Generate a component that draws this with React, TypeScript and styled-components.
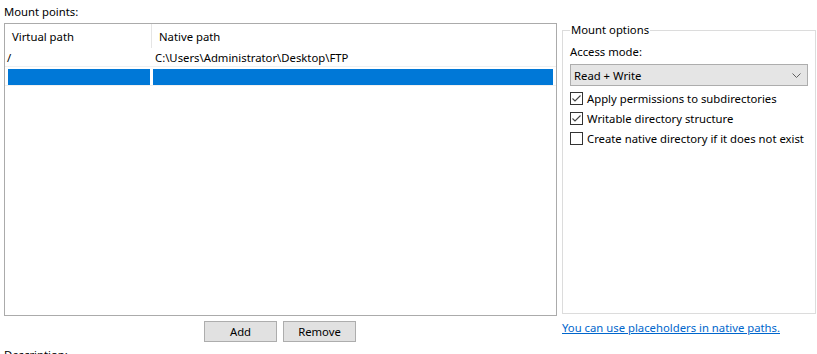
import styled, { createGlobalStyle } from 'styled-components'

/**
 * Style
 */
const GlobalStyle = createGlobalStyle`
  html, body {
    margin: 0;
    padding: 0;
    background: #fff;
  }

  body {
    font-family: "Noto Sans", "Liberation Sans", sans-serif;
    font-size: 11.3px;
    color: #000;
    overflow: hidden;
  }
`

const Page = styled.div`
  width: 817px;
  height: 354px;
  box-sizing: border-box;
  padding: 4px 2px 0 4px;
  overflow: hidden;
`

const Label = styled.div`
  line-height: 16px;
  height: 16px;
  white-space: nowrap;
`

const MainGrid = styled.div`
  display: grid;
  grid-template-columns: 553px 254px;
  column-gap: 5px;
  margin-top: 3px;
`

const LeftColumn = styled.div`
  display: flex;
  flex-direction: column;
`

const ListBox = styled.div`
  height: 293px;
  box-sizing: border-box;
  border: 1px solid #ababab;
  background: #fff;
  display: flex;
  flex-direction: column;
`

const ListRow = styled.div<{ $height: number; $line?: boolean }>`
  display: grid;
  grid-template-columns: 147px 1fr;
  height: ${p => p.$height}px;
  box-sizing: border-box;
  border-bottom: ${p => (p.$line ? '1px solid #f0f0f0' : 'none')};
`

const HeaderCell = styled.div<{ $sep?: boolean }>`
  display: flex;
  align-items: center;
  padding-left: 7px;
  border-right: ${p => (p.$sep ? '1px solid #e5e5e5' : 'none')};
  margin-right: ${p => (p.$sep ? '0' : '2px')};
  white-space: nowrap;
`

const Cell = styled.div<{ $pad: number }>`
  display: flex;
  align-items: center;
  padding-left: ${p => p.$pad}px;
  white-space: nowrap;
`

const SelectedCell = styled.div<{ $left: number; $right: number }>`
  margin: 2px ${p => p.$right}px 0 ${p => p.$left}px;
  background: #0078d7;
`

const ButtonRow = styled.div`
  display: flex;
  justify-content: center;
  gap: 6px;
  margin-top: 5px;
  padding-right: 1px;
`

const Button = styled.button`
  width: 73px;
  height: 21px;
  box-sizing: border-box;
  border: 1px solid #adadad;
  background: #e1e1e1;
  font-family: inherit;
  font-size: 11.3px;
  color: #000;
  padding: 0;
  line-height: 18px;
`

const RightColumn = styled.div`
  display: flex;
  flex-direction: column;
`

const GroupBox = styled.fieldset`
  height: 291px;
  box-sizing: border-box;
  margin: 0;
  padding: 0 7px;
  border: 1px solid #dcdcdc;
  min-width: 0;

  legend {
    padding: 0 1px;
    line-height: 14px;
    margin-left: 0;
  }
`

const FieldLabel = styled.div`
  line-height: 16px;
  margin-top: 7px;
`

const Combo = styled.div`
  margin-top: 4px;
  height: 22px;
  box-sizing: border-box;
  border: 1px solid #adadad;
  background: #e5e5e5;
  display: flex;
  align-items: center;
  justify-content: space-between;
  padding: 0 6px 0 3px;
`

const CheckRow = styled.label`
  display: flex;
  align-items: center;
  gap: 4px;
  height: 20px;
  white-space: nowrap;

  &:first-of-type {
    margin-top: 2px;
  }

  svg {
    flex-shrink: 0;
  }
`

const Link = styled.a`
  margin-top: 6px;
  color: #0066cc;
  text-decoration: underline;
  line-height: 16px;
  white-space: nowrap;
`

const Description = styled(Label)`
  margin-top: 5px;
`

/**
 * Parts
 */
const CheckBox = ({ checked }: { checked: boolean }): JSX.Element => (
  <svg width="13" height="13" viewBox="0 0 13 13">
    <rect x="0.5" y="0.5" width="12" height="12" fill="#fff" stroke="#333" />
    {checked && <path d="M2.5 6.5 L5 9 L10.5 3.5" fill="none" stroke="#444" strokeWidth="1.1" />}
  </svg>
)

const Chevron = (): JSX.Element => (
  <svg width="9" height="5" viewBox="0 0 9 5">
    <path d="M0.5 0.5 L4.5 4.5 L8.5 0.5" fill="none" stroke="#606060" strokeWidth="1" />
  </svg>
)

const options = [
  { label: 'Apply permissions to subdirectories', checked: true },
  { label: 'Writable directory structure', checked: true },
  { label: 'Create native directory if it does not exist', checked: false }
]

/**
 * Component
 */
const App = (): JSX.Element => {
  return (
    <Page>
      <GlobalStyle />
      <Label>Mount points:</Label>
      <MainGrid>
        <LeftColumn>
          <ListBox>
            <ListRow $height={24}>
              <HeaderCell $sep>Virtual path</HeaderCell>
              <HeaderCell>Native path</HeaderCell>
            </ListRow>
            <ListRow $height={19} $line>
              <Cell $pad={2}>/</Cell>
              <Cell $pad={3}>C:\Users\Administrator\Desktop\FTP</Cell>
            </ListRow>
            <ListRow $height={19} $line>
              <SelectedCell $left={3} $right={2} />
              <SelectedCell $left={1} $right={3} />
            </ListRow>
          </ListBox>
          <ButtonRow>
            <Button>Add</Button>
            <Button>Remove</Button>
          </ButtonRow>
        </LeftColumn>
        <RightColumn>
          <GroupBox>
            <legend>Mount options</legend>
            <FieldLabel>Access mode:</FieldLabel>
            <Combo>
              <span>Read + Write</span>
              <Chevron />
            </Combo>
            {options.map(o => (
              <CheckRow key={o.label}>
                <CheckBox checked={o.checked} />
                {o.label}
              </CheckRow>
            ))}
          </GroupBox>
          <Link href="#">You can use placeholders in native paths.</Link>
        </RightColumn>
      </MainGrid>
      <Description>Description:</Description>
    </Page>
  )
}

export default App
